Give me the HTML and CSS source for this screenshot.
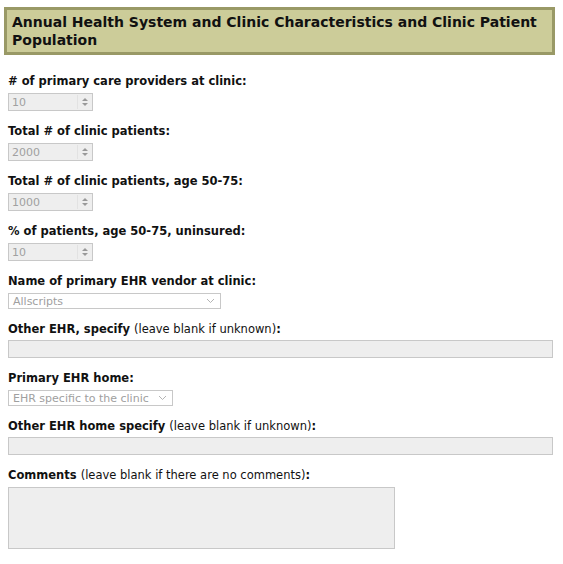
FILE: index.html
```html
<!DOCTYPE html>
<html lang="en">
<head>
    <meta charset="UTF-8">
    <title>Annual Health System and Clinic Characteristics</title>
    <link rel="stylesheet" href="styles.css">
</head>
<body>
    <h2 class="section-title">Annual Health System and Clinic Characteristics and Clinic Patient Population</h2>

    <form class="clinic-form">
        <div class="field">
            <label class="field-label"># of primary care providers at clinic:</label>
            <div class="number-box"><span class="value">10</span><span class="spin"><i class="up"></i><i class="down"></i></span></div>
        </div>

        <div class="field">
            <label class="field-label">Total # of clinic patients:</label>
            <div class="number-box"><span class="value">2000</span><span class="spin"><i class="up"></i><i class="down"></i></span></div>
        </div>

        <div class="field">
            <label class="field-label">Total # of clinic patients, age 50-75:</label>
            <div class="number-box"><span class="value">1000</span><span class="spin"><i class="up"></i><i class="down"></i></span></div>
        </div>

        <div class="field">
            <label class="field-label">% of patients, age 50-75, uninsured:</label>
            <div class="number-box"><span class="value">10</span><span class="spin"><i class="up"></i><i class="down"></i></span></div>
        </div>

        <div class="field">
            <label class="field-label">Name of primary EHR vendor at clinic:</label>
            <div class="select-box vendor"><span class="value">Allscripts</span>
                <svg class="chevron" width="9" height="6" viewBox="0 0 9 6"><path d="M1 1 L4.5 4.5 L8 1" fill="none" stroke="#b4b4b4" stroke-width="1"/></svg>
            </div>
        </div>

        <div class="field">
            <label class="field-label">Other EHR, specify <span class="hint">(leave blank if unknown)</span>:</label>
            <div class="text-box"></div>
        </div>

        <div class="field">
            <label class="field-label">Primary EHR home:</label>
            <div class="select-box home"><span class="value">EHR specific to the clinic</span>
                <svg class="chevron" width="9" height="6" viewBox="0 0 9 6"><path d="M1 1 L4.5 4.5 L8 1" fill="none" stroke="#b4b4b4" stroke-width="1"/></svg>
            </div>
        </div>

        <div class="field">
            <label class="field-label">Other EHR home specify <span class="hint">(leave blank if unknown)</span>:</label>
            <div class="text-box"></div>
        </div>

        <div class="field">
            <label class="field-label">Comments <span class="hint">(leave blank if there are no comments)</span>:</label>
            <div class="text-area"></div>
        </div>
    </form>
</body>
</html>
```

FILE: styles.css
```css
body {
    margin: 0;
    padding: 7px 8px 0 4px;
    font-family: "DejaVu Sans", Verdana, sans-serif;
    color: #111;
    background: #fff;
}

.section-title {
    margin: 0;
    padding: 3px 2px 3px 5px;
    background-color: #cccc99;
    border: 3px solid #999966;
    font-size: 14px;
    line-height: 18px;
    font-weight: bold;
    color: #111;
}

.clinic-form {
    padding: 19px 0 0 4px;
    display: flex;
    flex-direction: column;
    gap: 13px;
}

.field {
    display: flex;
    flex-direction: column;
    gap: 5px;
    align-items: flex-start;
}

.field-label {
    font-size: 11.5px;
    line-height: 14px;
    font-weight: bold;
}

.hint {
    font-weight: normal;
}

.number-box {
    width: 83px;
    height: 16px;
    border: 1px solid #c8c8c8;
    background: #eeeeee;
    display: flex;
    align-items: center;
    justify-content: space-between;
}

.value {
    font-size: 11px;
    color: #a0a0a0;
    padding-left: 3px;
}

.spin {
    width: 13px;
    height: 14px;
    margin-right: 1px;
    border-left: 1px solid #e2e2e2;
    display: flex;
    flex-direction: column;
    align-items: center;
    justify-content: center;
    gap: 2px;
}

.spin i {
    width: 0;
    height: 0;
    border-left: 3px solid transparent;
    border-right: 3px solid transparent;
}

.spin .up {
    border-bottom: 3px solid #999;
}

.spin .down {
    border-top: 3px solid #999;
}

.select-box {
    height: 14px;
    border: 1px solid #c8c8c8;
    background: #fff;
    display: flex;
    align-items: center;
    justify-content: space-between;
    padding-right: 5px;
}

.select-box .value {
    padding-left: 4px;
}

.select-box.vendor {
    width: 206px;
}

.select-box.home {
    width: 158px;
}

.chevron {
    display: block;
}

.text-box {
    width: 543px;
    height: 16px;
    margin-top: -1px;
    border: 1px solid #c8c8c8;
    background: #eeeeee;
}

.text-area {
    width: 385px;
    height: 60px;
    border: 1px solid #c8c8c8;
    background: #eeeeee;
}
```
